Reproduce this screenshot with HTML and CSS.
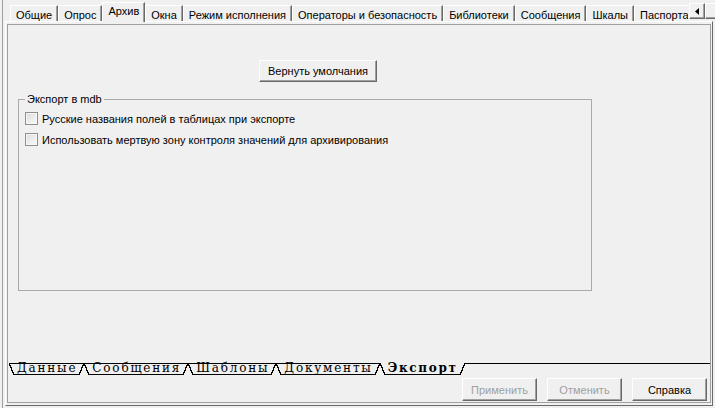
FILE: index.html
```html
<!DOCTYPE html>
<html lang="ru">
<head>
<meta charset="utf-8">
<title>Настройки — Архив</title>
<link rel="stylesheet" href="styles.css">
</head>
<body>
<div class="window">
  <div class="tabstrip">
    <div class="tabs">
      <div class="tab">Общие</div>
      <div class="tab">Опрос</div>
      <div class="tab active">Архив</div>
      <div class="tab">Окна</div>
      <div class="tab">Режим исполнения</div>
      <div class="tab">Операторы и безопасность</div>
      <div class="tab">Библиотеки</div>
      <div class="tab">Сообщения</div>
      <div class="tab">Шкалы</div>
      <div class="tab">Паспорта</div>
    </div>
    <div class="scroll-btn scroll-left"><svg width="4" height="7" viewBox="0 0 4 7"><polygon points="4,0 4,7 0,3.5" fill="#000"/></svg></div>
    <div class="scroll-btn scroll-right"></div>
  </div>
  <div class="page">
    <div class="sheet">
      <div class="sheet-body">
        <button class="btn btn-defaults" type="button">Вернуть умолчания</button>
        <fieldset class="group">
          <legend>Экспорт в mdb</legend>
          <label class="check"><span class="box"></span>Русские названия полей в таблицах при экспорте</label>
          <label class="check"><span class="box"></span>Использовать мертвую зону контроля значений для архивирования</label>
        </fieldset>
      </div>
      <div class="tabset">
        <span class="btab">Данные</span>
        <span class="btab">Сообщения</span>
        <span class="btab">Шаблоны</span>
        <span class="btab">Документы</span>
        <span class="btab active">Экспорт</span>
        <span class="tabset-rest"></span>
      </div>
      <div class="actions">
        <button class="btn" type="button" disabled>Применить</button>
        <button class="btn" type="button" disabled>Отменить</button>
        <button class="btn" type="button">Справка</button>
      </div>
    </div>
  </div>
</div>
</body>
</html>
```
FILE: styles.css
```css
* { box-sizing: border-box; }
html, body { margin: 0; padding: 0; }
body {
  width: 715px;
  height: 408px;
  overflow: hidden;
  background: #f0f0f0;
  font-family: "Liberation Sans", Arial, sans-serif;
  font-size: 11px;
  color: #000;
}
.window {
  height: 408px;
  margin-left: 2px;
  border-left: 1px solid #a0a0a0;
  display: flex;
  flex-direction: column;
}
.tabstrip {
  height: 21px;
  flex: none;
  display: flex;
  padding-left: 7px;
}
.tabs {
  width: 678px;
  height: 22px;
  flex: none;
  display: flex;
  align-items: flex-start;
  overflow: hidden;
  position: relative;
  z-index: 1;
}
.tab {
  flex: none;
  margin-top: 5px;
  height: 16px;
  padding: 3px 5px 0;
  line-height: 12px;
  border-top: 1px solid #fff;
  border-left: 1px solid #fff;
  border-right: 1px solid #696969;
  box-shadow: inset -1px 0 #a0a0a0;
  background: #f0f0f0;
  white-space: nowrap;
}
.tab.active {
  margin-top: 2px;
  height: 20px;
  padding-top: 2px;
}
.scroll-btn {
  flex: none;
  width: 16px;
  height: 16px;
  margin-top: 3px;
  border: 1px solid;
  border-color: #fff #696969 #696969 #fff;
  box-shadow: inset -1px -1px #a0a0a0;
  background: #f0f0f0;
  display: flex;
  align-items: center;
  justify-content: center;
}
.scroll-btn svg { display: block; }
.scroll-left { margin-left: 1px; }
.scroll-right { width: 20px; }
.page {
  flex: 1;
  margin: 0 2px 2px 2px;
  border: 1px solid;
  border-color: #fff #696969 #696969 #fff;
  padding: 2px 1px 2px 1px;
  display: flex;
}
.sheet {
  flex: 1;
  border: 1px solid #a0a0a0;
  display: flex;
  flex-direction: column;
}
.sheet-body {
  flex: 1;
  padding-top: 35px;
}
.btn {
  font: 11px "Liberation Sans", Arial, sans-serif;
  color: #000;
  background: #f0f0f0;
  border: 1px solid;
  border-color: #fff #696969 #696969 #fff;
  box-shadow: inset -1px -1px #a0a0a0;
  padding: 0;
  margin: 0;
}
.btn:disabled { color: #a0a0a0; }
.btn-defaults {
  display: block;
  margin-left: 251px;
  width: 118px;
  height: 22px;
}
.group {
  margin: 11px 0 0 10px;
  width: 574px;
  height: 198px;
  border: 1px solid #a9a9a9;
  padding: 2px 6px 0 6px;
  min-width: 0;
}
.group legend {
  padding: 0 2px;
  line-height: 13px;
}
.check {
  display: flex;
  align-items: center;
  height: 21px;
  white-space: nowrap;
}
.box {
  flex: none;
  width: 13px;
  height: 13px;
  margin-right: 4px;
  border: 1px solid #8f8f8f;
  background: linear-gradient(135deg, #dcdcdc, #fbfbfb);
  box-shadow: inset 0 0 0 1px #f6f6f6;
}
.tabset {
  display: flex;
  height: 12px;
  margin-left: 1px;
  flex: none;
}
.btab {
  flex: none;
  height: 12px;
  padding: 0 7px 0 8px;
  line-height: 11px;
  font-family: "DejaVu Serif", "Liberation Serif", serif;
  font-size: 12px;
  letter-spacing: 1.8px;
  white-space: nowrap;
  background:
    linear-gradient(to top right, transparent calc(50% - 0.7px), #000 calc(50% - 0.7px), #000 calc(50% + 0.7px), transparent calc(50% + 0.7px)) left top / 5px 100% no-repeat,
    linear-gradient(to top left, transparent calc(50% - 0.7px), #000 calc(50% - 0.7px), #000 calc(50% + 0.7px), transparent calc(50% + 0.7px)) right top / 5px 100% no-repeat,
    linear-gradient(#000, #000) left top / 100% 1px no-repeat,
    linear-gradient(#000, #000) 4px bottom / calc(100% - 8px) 1px no-repeat;
}
.btab.active {
  font-weight: bold;
  letter-spacing: 1.7px;
  background:
    linear-gradient(to top right, transparent calc(50% - 0.7px), #000 calc(50% - 0.7px), #000 calc(50% + 0.7px), transparent calc(50% + 0.7px)) left top / 5px 100% no-repeat,
    linear-gradient(to top left, transparent calc(50% - 0.7px), #000 calc(50% - 0.7px), #000 calc(50% + 0.7px), transparent calc(50% + 0.7px)) right top / 5px 100% no-repeat,
    linear-gradient(#000, #000) 4px bottom / calc(100% - 8px) 1px no-repeat;
}
.tabset-rest {
  flex: 1;
  border-top: 1px solid #000;
}
.actions {
  flex: none;
  display: flex;
  justify-content: flex-end;
  gap: 10px;
  margin: 3px 3px 1px 0;
}
.actions .btn {
  width: 75px;
  height: 23px;
}
```
